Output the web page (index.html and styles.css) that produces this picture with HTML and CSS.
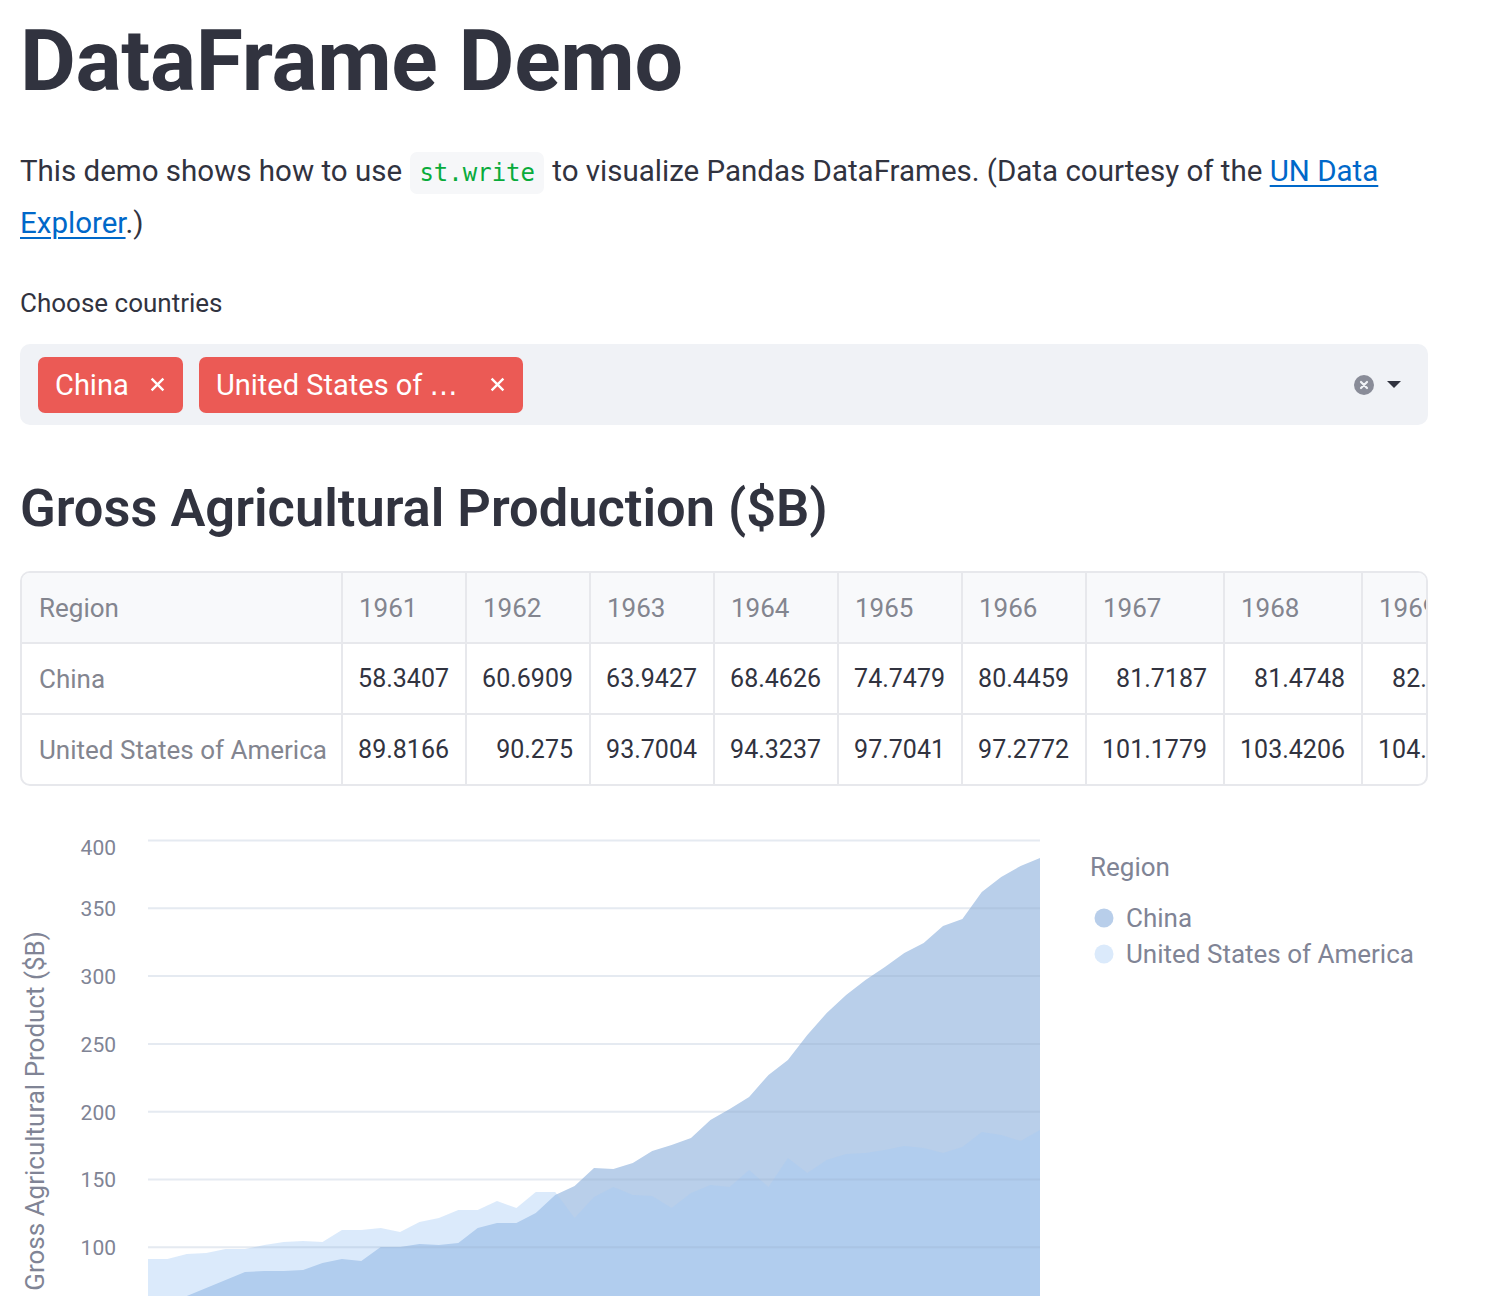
FILE: index.html
```html
<!DOCTYPE html>
<html lang="en">
<head>
<meta charset="utf-8">
<title>DataFrame Demo</title>
<link rel="stylesheet" href="styles.css">
</head>
<body>
<main class="page">
  <h1 class="title">DataFrame Demo</h1>
  <p class="intro">This demo shows how to use <code class="code">st.write</code> to visualize Pandas DataFrames. (Data courtesy of the <a href="#" class="link">UN Data Explorer</a>.)</p>

  <div class="field-label">Choose countries</div>
  <div class="select">
    <div class="tags">
      <span class="tag tag-short"><span class="tag-text">China</span><svg class="tag-x" viewBox="0 0 14 14"><path d="M1.5 1.5L12.5 12.5M12.5 1.5L1.5 12.5"/></svg></span>
      <span class="tag tag-long"><span class="tag-text">United States of <span class="ellipsis">…</span></span><svg class="tag-x" viewBox="0 0 14 14"><path d="M1.5 1.5L12.5 12.5M12.5 1.5L1.5 12.5"/></svg></span>
    </div>
    <div class="select-icons">
      <svg class="clear-icon" viewBox="0 0 20 20"><circle cx="10" cy="10" r="10" class="clear-bg"/><path d="M7 7L13 13M13 7L7 13" class="clear-x"/></svg>
      <svg class="caret-icon" viewBox="0 0 14 7"><path d="M0 0H14L7 7Z"/></svg>
    </div>
  </div>

  <h2 class="subtitle">Gross Agricultural Production ($B)</h2>

  <div class="dataframe">
    <div class="df-grid">
      <div class="cell cell-head cell-first">Region</div>
      <div class="cell cell-head">1961</div>
      <div class="cell cell-head">1962</div>
      <div class="cell cell-head">1963</div>
      <div class="cell cell-head">1964</div>
      <div class="cell cell-head">1965</div>
      <div class="cell cell-head">1966</div>
      <div class="cell cell-head">1967</div>
      <div class="cell cell-head">1968</div>
      <div class="cell cell-head">1969</div>

      <div class="cell cell-index">China</div>
      <div class="cell">58.3407</div>
      <div class="cell">60.6909</div>
      <div class="cell">63.9427</div>
      <div class="cell">68.4626</div>
      <div class="cell">74.7479</div>
      <div class="cell">80.4459</div>
      <div class="cell">81.7187</div>
      <div class="cell">81.4748</div>
      <div class="cell">82.5331</div>

      <div class="cell cell-index row-last">United States of America</div>
      <div class="cell row-last">89.8166</div>
      <div class="cell row-last">90.275</div>
      <div class="cell row-last">93.7004</div>
      <div class="cell row-last">94.3237</div>
      <div class="cell row-last">97.7041</div>
      <div class="cell row-last">97.2772</div>
      <div class="cell row-last">101.1779</div>
      <div class="cell row-last">103.4206</div>
      <div class="cell row-last">104.1254</div>
    </div>
  </div>

  <svg class="chart" width="1408" height="620" viewBox="20 820 1408 620">
    <path class="area-china" d="M148 1383 L148 1304 L167.4 1301 L186.8 1296 L206.2 1288 L225.6 1280 L245 1272 L264.3 1271 L283.7 1271 L303.1 1270 L322.5 1263 L341.9 1259 L361.3 1261 L380.7 1247 L400.1 1247 L419.5 1244 L438.9 1245 L458.3 1243 L477.7 1228 L497 1223 L516.4 1223 L535.8 1213 L555.2 1195 L574.6 1186 L594 1168 L613.4 1169 L632.8 1163 L652.2 1151 L671.6 1145 L691 1138 L710.4 1120 L729.7 1109 L749.1 1097 L768.5 1075 L787.9 1060 L807.3 1035 L826.7 1013 L846.1 995 L865.5 980 L884.9 967 L904.3 953 L923.7 943 L943 926 L962.4 919 L981.8 892 L1001.2 877 L1020.6 866 L1040 858 L1040 1383 Z"/>
    <path class="area-usa" d="M148 1383 L148 1259 L167.4 1259 L186.8 1254 L206.2 1253 L225.6 1249 L245 1249 L264.3 1245 L283.7 1242 L303.1 1241 L322.5 1242 L341.9 1230 L361.3 1230 L380.7 1228 L400.1 1232 L419.5 1222 L438.9 1218 L458.3 1210 L477.7 1210 L497 1201 L516.4 1208 L535.8 1192 L555.2 1192 L574.6 1218 L594 1197 L613.4 1187 L632.8 1195 L652.2 1196 L671.6 1208 L691 1193 L710.4 1185 L729.7 1187 L749.1 1170 L768.5 1187 L787.9 1158 L807.3 1173 L826.7 1160 L846.1 1154 L865.5 1153 L884.9 1150 L904.3 1146 L923.7 1148 L943 1153 L962.4 1147 L981.8 1132 L1001.2 1135 L1020.6 1141 L1040 1130 L1040 1383 Z"/>

    <g class="grid-lines">
      <line x1="148" x2="1040" y1="840.5" y2="840.5"/>
      <line x1="148" x2="1040" y1="908.3" y2="908.3"/>
      <line x1="148" x2="1040" y1="976.1" y2="976.1"/>
      <line x1="148" x2="1040" y1="1043.9" y2="1043.9"/>
      <line x1="148" x2="1040" y1="1111.7" y2="1111.7"/>
      <line x1="148" x2="1040" y1="1179.5" y2="1179.5"/>
      <line x1="148" x2="1040" y1="1247.3" y2="1247.3"/>
      <line x1="148" x2="1040" y1="1315.1" y2="1315.1"/>
    </g>

    <g class="ticks">
      <text x="116" y="855">400</text>
      <text x="116" y="916">350</text>
      <text x="116" y="984">300</text>
      <text x="116" y="1051.5">250</text>
      <text x="116" y="1119.5">200</text>
      <text x="116" y="1187">150</text>
      <text x="116" y="1255">100</text>
      <text x="116" y="1322.5">50</text>
      <text x="116" y="1382">0</text>
    </g>

    <text class="axis-title" x="44" y="1111" transform="rotate(-90 44 1111)">Gross Agricultural Product ($B)</text>

    <g class="legend">
      <text class="legend-title" x="1090" y="876">Region</text>
      <circle class="dot-china" cx="1104" cy="918" r="9.5"/>
      <text class="legend-label" x="1126" y="927">China</text>
      <circle class="dot-usa" cx="1104" cy="954" r="9.5"/>
      <text class="legend-label" x="1126" y="963">United States of America</text>
    </g>
  </svg>
</main>
</body>
</html>
```

FILE: styles.css
```css
* {
  box-sizing: border-box;
}

body {
  margin: 0;
  background: #ffffff;
  color: #31333f;
  font-family: Roboto, "Noto Sans", "Liberation Sans", sans-serif;
}

.page {
  width: 1408px;
  margin-left: 20px;
  padding-top: 11px;
}

.title {
  margin: 0;
  font-size: 86px;
  font-weight: 700;
  line-height: 100px;
  letter-spacing: -0.3px;
}

.intro {
  margin: 34px 0 0;
  font-size: 29.5px;
  line-height: 52px;
}

.code {
  font-family: "DejaVu Sans Mono", "Liberation Mono", monospace;
  font-size: 24px;
  line-height: 24px;
  color: #09ab3b;
  background: #f6f7f9;
  border-radius: 7px;
  padding: 7px 9px;
  margin: 0 1px;
}

.link {
  color: #0068c9;
  text-decoration: underline;
  text-decoration-thickness: 2px;
  text-underline-offset: 4px;
}

.field-label {
  margin-top: 36px;
  font-size: 26px;
  line-height: 36px;
}

.select {
  margin-top: 23px;
  height: 81px;
  background: #f0f2f6;
  border-radius: 10px;
  display: flex;
  align-items: center;
  justify-content: space-between;
  padding: 0 27px 0 18px;
}

.tags {
  display: flex;
  gap: 16px;
}

.tag {
  height: 56px;
  background: #eb5a55;
  color: #ffffff;
  border-radius: 7px;
  display: flex;
  align-items: center;
  justify-content: space-between;
  padding: 0 18px 0 17px;
  font-size: 29px;
  white-space: nowrap;
}

.tag-short {
  width: 145px;
}

.tag-long {
  width: 324px;
}

.ellipsis {
  font-family: "DejaVu Sans", sans-serif;
  font-size: 28px;
}

.tag-x {
  width: 15px;
  height: 15px;
  fill: none;
  stroke: #ffffff;
  stroke-width: 2.2;
}

.select-icons {
  display: flex;
  align-items: center;
  gap: 13px;
}

.clear-icon {
  width: 20px;
  height: 20px;
}

.clear-bg {
  fill: #898c98;
}

.clear-x {
  stroke: #f0f2f6;
  stroke-width: 2.2;
  stroke-linecap: round;
}

.caret-icon {
  width: 14px;
  height: 7px;
  fill: #31333f;
}

.subtitle {
  margin: 51px 0 0;
  font-size: 52.4px;
  font-weight: 600;
  line-height: 64px;
}

.dataframe {
  margin-top: 31px;
  border: 2px solid #e7e8ec;
  border-radius: 10px;
  overflow: hidden;
}

.df-grid {
  display: grid;
  grid-template-columns: 321px repeat(6, 124px) repeat(3, 138px);
  width: max-content;
}

.cell {
  height: 71px;
  border-right: 2px solid #e7e8ec;
  border-bottom: 2px solid #e7e8ec;
  display: flex;
  align-items: center;
  justify-content: flex-end;
  padding: 0 16px 0 16px;
  font-size: 25px;
  color: #31333f;
  white-space: nowrap;
}

.cell-head {
  background: #f8f9fb;
  color: #83858f;
  justify-content: flex-start;
  font-size: 26px;
}

.cell-first {
  padding-left: 17px;
}

.cell-index {
  color: #83858f;
  justify-content: flex-start;
  padding-left: 17px;
  font-size: 26px;
}

.row-last {
  height: 69px;
  border-bottom: none;
}

.chart {
  display: block;
  margin-top: 34px;
  font-family: Roboto, "Noto Sans", sans-serif;
}

.area-china {
  fill: #b9cfea;
}

.area-usa {
  fill: rgb(165, 202, 245);
  fill-opacity: 0.4;
}

.grid-lines line {
  stroke: rgb(150, 170, 200);
  stroke-opacity: 0.25;
  stroke-width: 2;
}

.ticks text {
  font-size: 21px;
  fill: #808495;
  text-anchor: end;
}

.axis-title {
  font-size: 26px;
  fill: #808495;
  text-anchor: middle;
}

.legend-title {
  font-size: 26px;
  fill: #808495;
}

.legend-label {
  font-size: 26px;
  fill: #808495;
}

.dot-china {
  fill: #b8ceea;
}

.dot-usa {
  fill: #dbeafb;
}
```
